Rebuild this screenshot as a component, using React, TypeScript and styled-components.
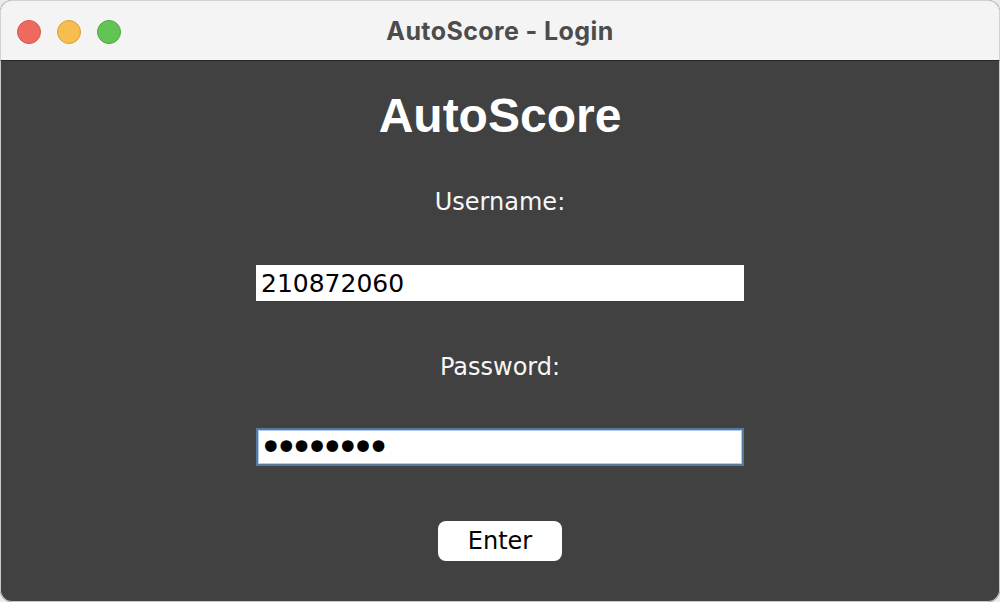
import React from "react";
import styled, { createGlobalStyle } from "styled-components";

const Global = createGlobalStyle`
  html, body { margin: 0; padding: 0; background: #ececec; }
  body { width: 1000px; height: 602px; overflow: hidden; }
  * { box-sizing: border-box; }
`;

const Window = styled.div`
  width: 1000px;
  height: 602px;
  border-radius: 12px;
  overflow: hidden;
  display: flex;
  flex-direction: column;
  background: #414141;
  box-shadow: inset 0 0 0 1px #c9c9c9;
`;

const TitleBar = styled.div`
  height: 61px;
  flex: none;
  display: flex;
  align-items: center;
  justify-content: center;
  position: relative;
  background: #f4f4f4;
  border-top: 1px solid #d2d2d2;
  border-left: 1px solid #d2d2d2;
  border-right: 1px solid #d2d2d2;
  border-bottom: 1px solid #262626;
  border-radius: 12px 12px 0 0;
`;

const Lights = styled.div`
  position: absolute;
  left: 16px;
  top: 19px;
  display: flex;
  gap: 16px;
`;

const Light = styled.span<{ $c: string; $b: string }>`
  width: 24px;
  height: 24px;
  border-radius: 50%;
  background: ${(p) => p.$c};
  border: 1px solid ${(p) => p.$b};
`;

const Title = styled.div`
  font-family: Inter, "Open Sans", sans-serif;
  font-weight: 700;
  font-size: 25px;
  letter-spacing: 0.4px;
  color: #4c4c4c;
`;

const Content = styled.div`
  flex: 1;
  display: flex;
  flex-direction: column;
  align-items: center;
  padding-top: 29px;
`;

const Heading = styled.h1`
  margin: 0;
  font-family: "Liberation Sans", Arial, sans-serif;
  font-weight: 700;
  font-size: 48px;
  line-height: 52px;
  color: #ffffff;
`;

const Label = styled.div<{ $mt: number }>`
  margin-top: ${(p) => p.$mt}px;
  font-family: "DejaVu Sans", sans-serif;
  font-size: 24px;
  line-height: 30px;
  color: #f7f7f7;
`;

const Field = styled.input<{ $focus?: boolean }>`
  display: block;
  width: 488px;
  height: ${(p) => (p.$focus ? 38 : 36)}px;
  margin-top: ${(p) => (p.$focus ? 46 : 48)}px;
  padding: 0 5px;
  border: none;
  outline: none;
  background: #ffffff;
  color: #000000;
  font-family: "DejaVu Sans", sans-serif;
  font-size: 25px;
  box-shadow: ${(p) =>
    p.$focus ? "inset 0 0 0 2px #56799f, inset 0 0 0 3px #b3cdef" : "0 1px 0 #3a3a3a"};
`;

const PassField = styled(Field)`
  padding: 0 3px;
  font-size: 40px;
  letter-spacing: -8.2px;
  line-height: 38px;
`;

const Button = styled.button`
  margin-top: 55px;
  width: 124px;
  height: 40px;
  border: none;
  border-radius: 8px;
  background: #ffffff;
  color: #000000;
  font-family: "DejaVu Sans", sans-serif;
  font-size: 24px;
  padding: 0;
  cursor: pointer;
`;

export default function App() {
  return (
    <>
      <Global />
      <Window>
        <TitleBar>
          <Lights>
            <Light $c="#ee6a5f" $b="#d5564b" />
            <Light $c="#f6be4f" $b="#d9a23a" />
            <Light $c="#61c454" $b="#4ea842" />
          </Lights>
          <Title>AutoScore - Login</Title>
        </TitleBar>
        <Content>
          <Heading>AutoScore</Heading>
          <Label $mt={45}>Username:</Label>
          <Field readOnly defaultValue="210872060" />
          <Label $mt={51}>Password:</Label>
          <PassField $focus type="password" readOnly defaultValue="12345678" />
          <Button>Enter</Button>
        </Content>
      </Window>
    </>
  );
}
